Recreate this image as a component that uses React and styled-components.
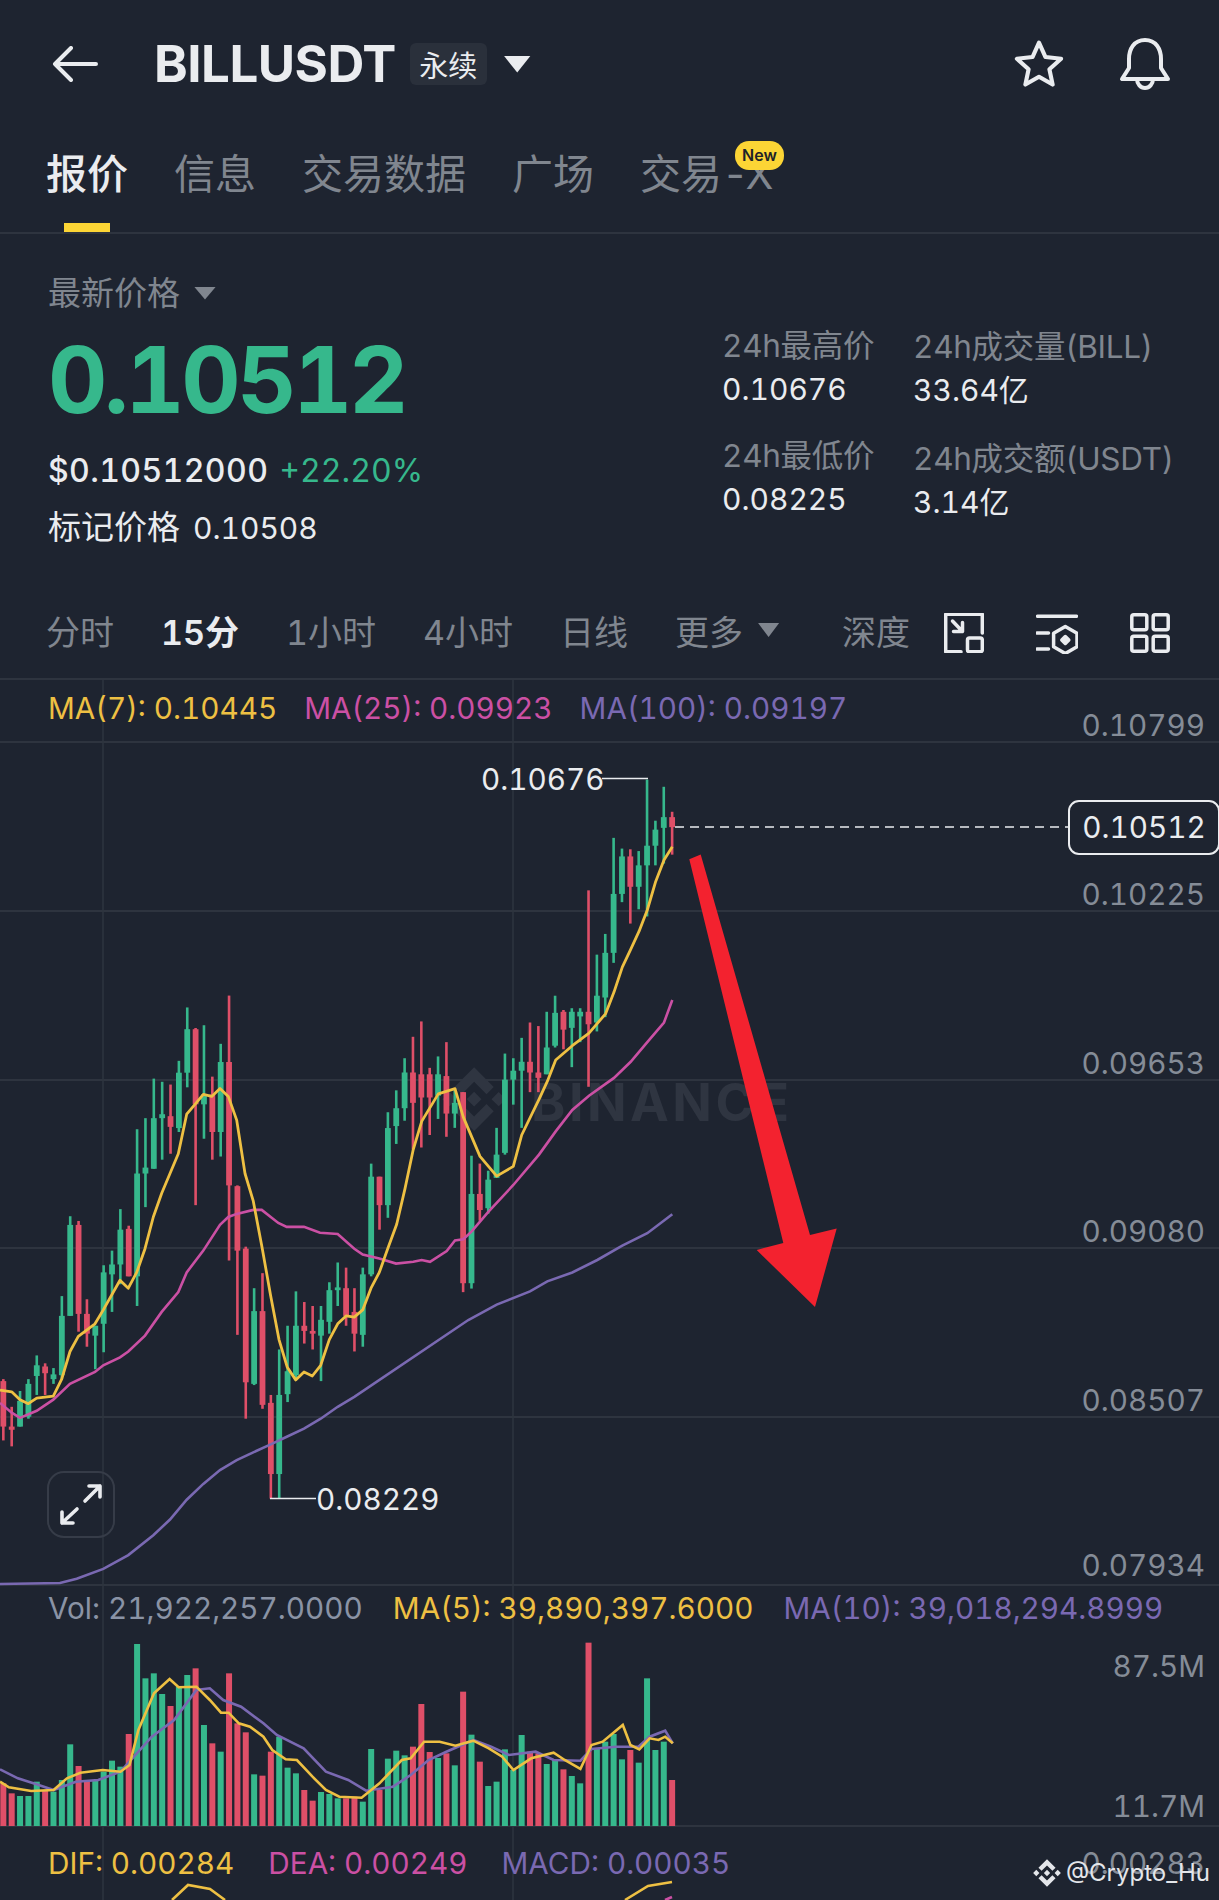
import React from 'react'
import styled, { createGlobalStyle } from 'styled-components'

const BG = '#1e2430'
const LINE = '#2e343f'
const TEXT = '#eaecef'
const MUTED = '#80868f'
const GREEN = '#36b88c'
const RED = '#df4f68'
const YELLOW = '#eec043'
const PINK = '#cb50a4'
const PURPLE = '#7a69b2'

const GlobalStyle = createGlobalStyle`
  html, body {
    margin: 0;
    padding: 0;
    background: ${BG};
  }
  * {
    box-sizing: border-box;
  }
`

const Page = styled.div`
  width: 1219px;
  height: 1900px;
  overflow: hidden;
  background: ${BG};
  color: ${TEXT};
  font-family: Inter, 'Noto Sans CJK SC', sans-serif;
  font-variant-numeric: tabular-nums;
`

const Header = styled.header`
  display: flex;
  align-items: center;
  height: 128px;
  padding: 0 48px 0 52px;
`

const Symbol = styled.h1`
  margin: 0 0 0 56px;
  font-size: 51px;
  line-height: 60px;
  font-weight: 700;
  letter-spacing: -0.5px;
`

const Tag = styled.span`
  margin-left: 14px;
  width: 77px;
  height: 42px;
  display: flex;
  align-items: center;
  justify-content: center;
  border-radius: 6px;
  background: #2a303b;
  font-size: 29px;
`

const Caret = styled.span`
  display: inline-block;
  flex: none;
  width: ${(p) => p.$w}px;
  height: ${(p) => p.$h}px;
  margin-left: ${(p) => p.$gap}px;
  background: ${(p) => p.$color};
  clip-path: polygon(0 0, 100% 0, 50% 100%);
`

const HeaderActions = styled.div`
  display: flex;
  align-items: center;
  gap: 54px;
  margin-left: auto;
`

const Tabs = styled.nav`
  display: flex;
  align-items: flex-start;
  gap: 46px;
  height: 106px;
  padding: 26px 0 0 46px;
  border-bottom: 2px solid ${LINE};
`

const Tab = styled.div`
  position: relative;
  display: flex;
  flex-direction: column;
  align-items: center;
  font-size: 41px;
  line-height: 40px;
  font-weight: ${(p) => (p.$active ? 500 : 400)};
  color: ${(p) => (p.$active ? TEXT : MUTED)};
`

const TabLabel = styled.span`
  white-space: nowrap;
`

const TabSuffix = styled.span`
  letter-spacing: -3px;
`

const TabBar = styled.span`
  width: 46px;
  height: 9px;
  margin-top: 29px;
  background: #fcd535;
`

const NewBadge = styled.span`
  position: absolute;
  left: 95px;
  top: -13px;
  width: 49px;
  height: 29px;
  border-radius: 14px;
  background: #fcd535;
  color: #1e2329;
  font-size: 16px;
  line-height: 29px;
  font-weight: 600;
  text-align: center;
`

const Overview = styled.section`
  display: flex;
  height: 356px;
  padding-left: 48px;
`

const PriceColumn = styled.div`
  width: 674px;
  padding-top: 39px;
`

const PriceLabel = styled.div`
  display: flex;
  align-items: center;
  font-size: 33px;
  line-height: 40px;
  color: ${MUTED};
`

const LastPrice = styled.div`
  margin-top: 17px;
  font-size: 92px;
  line-height: 100px;
  font-weight: 700;
  letter-spacing: -3.5px;
  color: ${GREEN};
`

const FiatRow = styled.div`
  display: flex;
  gap: 11px;
  margin-top: 21px;
  font-size: 32px;
  line-height: 40px;
  font-weight: 500;
  letter-spacing: 0.4px;
`

const Change = styled.span`
  color: ${GREEN};
  font-weight: 400;
  letter-spacing: 0;
`

const MarkRow = styled.div`
  display: flex;
  align-items: baseline;
  gap: 13px;
  margin-top: 16px;
  font-size: 33px;
  line-height: 40px;
`

const MarkValue = styled.span`
  font-size: 30px;
`

const StatColumn = styled.div`
  display: flex;
  flex-direction: column;
  width: ${(p) => p.$width}px;
  padding-top: ${(p) => p.$top}px;
  gap: ${(p) => p.$gap}px;
`

const Stat = styled.div`
  display: flex;
  flex-direction: column;
  gap: 7px;
  white-space: nowrap;
`

const StatLabel = styled.span`
  font-size: 31.5px;
  line-height: 36px;
  letter-spacing: -0.3px;
  color: ${MUTED};
`

const StatValue = styled.span`
  font-size: 30px;
  line-height: 36px;
`

const Toolbar = styled.div`
  display: flex;
  align-items: center;
  justify-content: space-between;
  height: 90px;
  padding: 0 49px 2px 46px;
  border-bottom: 2px solid ${LINE};
`

const IntervalRow = styled.div`
  display: flex;
  align-items: center;
  gap: 47px;
  padding-bottom: 6px;
`

const Interval = styled.span`
  display: flex;
  flex: none;
  align-items: center;
  white-space: nowrap;
  font-size: 34px;
  font-weight: ${(p) => (p.$active ? 600 : 400)};
  color: ${(p) => (p.$active ? TEXT : MUTED)};
`

const Depth = styled(Interval)`
  margin-left: 16px;
`

const ToolIcons = styled.div`
  display: flex;
  align-items: center;
  gap: 52px;
`

const Icon = styled.svg`
  display: block;
  flex: none;
  fill: none;
  stroke: ${TEXT};
  stroke-width: ${(p) => p.$stroke || 3.5};
  stroke-linecap: round;
  stroke-linejoin: round;
`

const Pane = styled.section`
  position: relative;
  height: ${(p) => p.$height}px;
`

const PaneSvg = styled.svg`
  display: block;
  width: 1219px;
  height: 100%;
`

const Legend = styled.div`
  position: absolute;
  left: 48px;
  top: ${(p) => p.$top}px;
  display: flex;
  gap: ${(p) => p.$gap}px;
  font-size: 29.7px;
  line-height: 36px;
  white-space: nowrap;
`

const LegendItem = styled.span`
  color: ${(p) => p.$color};
`

const AxisLabel = styled.text`
  font-family: Inter, sans-serif;
  font-size: 29.7px;
  font-variant-numeric: tabular-nums;
  fill: #858c97;
  text-anchor: end;
`

const ExtremeLabel = styled.text`
  font-family: Inter, sans-serif;
  font-size: 29.7px;
  font-variant-numeric: tabular-nums;
  fill: ${TEXT};
`

const ChartMark = styled.text`
  font-family: Inter, sans-serif;
  font-size: 52px;
  font-weight: 700;
  fill: #2f3541;
`

const PriceTag = styled.div`
  position: absolute;
  left: 1068px;
  top: 120px;
  width: 152px;
  height: 55px;
  border: 2px solid ${TEXT};
  border-radius: 11px;
  background: ${BG};
  font-size: 29.7px;
  line-height: 51px;
  text-align: center;
`

const ExpandButton = styled.button`
  position: absolute;
  left: 47px;
  top: 791px;
  width: 68px;
  height: 67px;
  padding: 0;
  border: 2px solid #363c48;
  border-radius: 17px;
  background: transparent;
`

const Credit = styled.div`
  position: absolute;
  right: 9px;
  bottom: 12px;
  display: flex;
  align-items: center;
  gap: 5px;
  font-size: 24px;
  line-height: 30px;
  color: #e4e6ea;
`

// the chart was read off enlarged crops, so each table keeps the crop's own units
const fromLeft = ([x, y]) => [x / 3, 960 + y / 2.529]
const fromRight = ([x, y]) => [340 + x / 3, 760 + y / 2.8]
const fromVol = ([x, y]) => [x / 2.24, 1580 + y / 3]
const toPoints = (list) => list.map((p) => `${p[0].toFixed(1)},${p[1].toFixed(1)}`).join(' ')

const leftCandles = [
  ['r', 1060, 1215, 1065, 1180], ['r', 1130, 1230, 1180, 1188], ['g', 1090, 1180, 1115, 1180],
  ['g', 1060, 1160, 1072, 1155], ['g', 1000, 1100, 1025, 1052], ['r', 1020, 1100, 1028, 1045],
  ['g', 1032, 1072, 1048, 1060], ['g', 850, 1060, 900, 1050], ['g', 648, 900, 670, 900],
  ['r', 660, 940, 670, 895], ['r', 858, 978, 895, 945], ['g', 925, 1035, 925, 950],
  ['g', 772, 992, 790, 920], ['g', 735, 890, 770, 795], ['g', 630, 820, 682, 770],
  ['r', 672, 800, 680, 800], ['g', 428, 875, 540, 800], ['g', 400, 625, 525, 540],
  ['g', 300, 528, 400, 528], ['g', 308, 505, 390, 400], ['r', 315, 490, 395, 422],
  ['g', 255, 435, 285, 425], ['g', 120, 322, 175, 285], ['r', 172, 620, 175, 365],
  ['g', 165, 452, 340, 365], ['r', 295, 505, 340, 435], ['g', 212, 497, 258, 435],
  ['r', 90, 760, 258, 570], ['r', 570, 948, 572, 735], ['r', 725, 1160, 730, 1068],
  ['g', 830, 1075, 888, 1072], ['r', 792, 1135, 888, 1125], ['r', 1100, 1362, 1120, 1300],
  ['g', 985, 1362, 1100, 1300], ['g', 925, 1118, 1040, 1098], ['g', 838, 1060, 925, 1050],
  ['r', 865, 970, 925, 938], ['r', 875, 985, 938, 945], ['g', 875, 1065, 910, 950],
  ['g', 815, 945, 835, 915], ['g', 765, 875, 828, 835], ['r', 778, 925, 830, 900],
  ['r', 830, 990, 890, 945], ['g', 778, 978, 795, 948], ['g', 515, 800, 548, 795],
  ['r', 548, 682, 548, 620], ['g', 385, 652, 425, 620],
]

const rightCandles = [
  ['g', 925, 1075, 975, 1025], ['g', 835, 1010, 875, 975], ['r', 775, 1090, 875, 960],
  ['r', 732, 1085, 880, 945], ['r', 862, 1050, 880, 945], ['g', 830, 1005, 880, 940],
  ['r', 790, 1055, 885, 990], ['g', 920, 1030, 960, 990], ['r', 930, 1490, 930, 1465],
  ['g', 1108, 1480, 1215, 1465], ['r', 1130, 1290, 1215, 1260], ['g', 1150, 1270, 1175, 1255],
  ['g', 1030, 1170, 1105, 1170], ['g', 822, 1105, 895, 1100], ['g', 835, 965, 870, 895],
  ['g', 778, 1030, 845, 870], ['r', 735, 930, 845, 875], ['r', 745, 930, 875, 890],
  ['g', 705, 880, 805, 880], ['g', 660, 805, 708, 800], ['r', 700, 810, 705, 755],
  ['g', 695, 860, 705, 750], ['g', 695, 790, 705, 718], ['r', 365, 915, 705, 740],
  ['g', 545, 760, 660, 735], ['g', 487, 720, 540, 665], ['g', 218, 568, 375, 540],
  ['g', 248, 398, 270, 375], ['r', 250, 458, 270, 355], ['g', 255, 418, 295, 355],
  ['g', 55, 438, 240, 295], ['g', 170, 295, 195, 240], ['g', 75, 290, 160, 190],
  ['r', 145, 265, 160, 188],
]

const candleX = (i) => 3.33 + i * 8.36

const candles = [
  ...leftCandles.map(([c, wt, wb, bt, bb], i) => ({
    c, x: candleX(i),
    wt: 960 + wt / 2.529, wb: 960 + wb / 2.529, bt: 960 + bt / 2.529, bb: 960 + bb / 2.529,
  })),
  ...rightCandles.map(([c, wt, wb, bt, bb], i) => ({
    c, x: candleX(i + leftCandles.length),
    wt: 760 + wt / 2.8, wb: 760 + wb / 2.8, bt: 760 + bt / 2.8, bb: 760 + bb / 2.8,
  })),
]

const ma7 = [
  ...[[0, 1088], [35, 1092], [60, 1112], [85, 1122], [110, 1108], [160, 1103], [185, 1060], [210, 990], [235, 952], [285, 920], [310, 885], [360, 810], [385, 830], [410, 790], [435, 730], [460, 650], [485, 590], [510, 540], [535, 490], [560, 390], [585, 365], [610, 340], [635, 345], [660, 325], [685, 345], [710, 405], [735, 540], [760, 610], [787, 730], [812, 850], [837, 960], [862, 1030], [887, 1062], [912, 1042], [937, 1052], [962, 1025], [988, 960], [1013, 920], [1038, 900], [1063, 903], [1088, 885], [1113, 830], [1138, 790], [1163, 730]].map(fromLeft),
  ...[[170, 1300], [195, 1200], [220, 1090], [245, 1012], [295, 935], [345, 920], [370, 1000], [420, 1110], [470, 1165], [520, 1138], [545, 1050], [597, 950], [622, 900], [647, 840], [697, 800], [747, 765], [797, 710], [822, 650], [847, 580], [872, 530], [897, 480], [922, 420], [947, 340], [972, 280], [997, 243]].map(fromRight),
]

const ma25 = [
  ...[[0, 1120], [35, 1145], [60, 1158], [110, 1140], [160, 1112], [210, 1072], [285, 1042], [310, 1025], [360, 1005], [385, 990], [435, 950], [485, 890], [535, 840], [560, 790], [610, 735], [660, 670], [685, 650], [710, 642], [760, 632], [785, 632], [835, 665], [860, 675], [912, 675], [960, 690], [1013, 693], [1063, 730], [1088, 745], [1138, 755]].map(fromLeft),
  ...[[168, 1410], [220, 1405], [245, 1400], [270, 1405], [320, 1375], [345, 1345], [370, 1342], [395, 1320], [445, 1265], [520, 1190], [597, 1105], [647, 1040], [697, 980], [747, 940], [822, 890], [872, 845], [922, 790], [972, 735], [997, 672]].map(fromRight),
]

const ma100 = [
  [0, 1584], [60, 1583],
  ...[[230, 1565], [310, 1540], [385, 1505], [460, 1455], [510, 1415], [560, 1365], [610, 1325], [660, 1290], [710, 1265], [760, 1245], [812, 1225], [862, 1205], [912, 1185], [962, 1160], [1013, 1130], [1063, 1105]].map(fromLeft),
  ...[[385, 1568], [470, 1525], [570, 1488], [622, 1460], [697, 1435], [772, 1400], [847, 1360], [922, 1325], [997, 1272]].map(fromRight),
]

const volumes = [
  ['r', 610], ['r', 640], ['g', 648], ['g', 648], ['g', 605], ['r', 630], ['g', 635], ['g', 600], ['g', 493],
  ['r', 558], ['r', 600], ['g', 600], ['g', 575], ['g', 542], ['g', 560], ['r', 462], ['g', 192], ['g', 295],
  ['g', 280], ['g', 342], ['r', 378], ['g', 320], ['g', 285], ['r', 265], ['g', 435], ['r', 490], ['g', 515],
  ['r', 280], ['r', 430], ['r', 457], ['g', 583], ['r', 587], ['r', 515], ['g', 470], ['g', 563], ['g', 580],
  ['r', 630], ['r', 662], ['g', 636], ['g', 642], ['g', 655], ['r', 655], ['r', 650], ['g', 665], ['g', 507],
  ['r', 630], ['g', 536], ['g', 512], ['g', 526], ['r', 500], ['r', 372], ['r', 516], ['g', 534], ['r', 520],
  ['g', 556], ['r', 335], ['g', 464], ['r', 545], ['g', 618], ['g', 605], ['g', 508], ['g', 570], ['g', 465],
  ['r', 515], ['r', 520], ['g', 552], ['g', 540], ['r', 568], ['g', 588], ['g', 610], ['r', 188], ['g', 505],
  ['g', 485], ['g', 462], ['g', 538], ['r', 510], ['g', 548], ['g', 295], ['g', 510], ['g', 485], ['r', 600],
]

const volMa5 = [[0, 605], [20, 622], [70, 633], [120, 630], [150, 595], [180, 578], [230, 570], [270, 575], [290, 555], [310, 450], [345, 340], [380, 297], [400, 322], [440, 320], [470, 360], [495, 398], [512, 398], [535, 430], [560, 440], [590, 470], [610, 510], [640, 538], [665, 540], [700, 590], [730, 630], [760, 650], [810, 653], [850, 610], [900, 540], [920, 535], [950, 485], [985, 485], [1020, 497], [1060, 482], [1095, 505], [1125, 530], [1150, 570], [1190, 535], [1240, 518], [1265, 540], [1300, 567], [1325, 495], [1350, 485], [1395, 435], [1412, 495], [1432, 508], [1455, 475], [1475, 480], [1490, 470], [1507, 490]].map(fromVol)

const volMa10 = [[0, 568], [40, 595], [80, 612], [120, 630], [170, 605], [220, 600], [270, 575], [300, 530], [340, 470], [390, 420], [440, 330], [470, 325], [500, 360], [540, 380], [590, 430], [620, 465], [680, 505], [730, 575], [780, 600], [820, 632], [880, 620], [920, 585], [960, 540], [1000, 515], [1060, 480], [1100, 500], [1140, 525], [1200, 515], [1240, 540], [1300, 542], [1325, 507], [1380, 500], [1430, 500], [1455, 470], [1490, 452], [1507, 490]].map(fromVol)

const arrow = [[1048, 278], [1082, 265], [1410, 1330], [1490, 1312], [1425, 1532], [1250, 1372], [1330, 1352]].map(fromRight)

const gridRows = [742, 911, 1080, 1248, 1417, 1585]
const axisLabels = [
  ['0.10799', 736], ['0.10225', 905], ['0.09653', 1074], ['0.09080', 1242], ['0.08507', 1411], ['0.07934', 1576],
]

const binancePath =
  'M38.73 53.2 63 28.94 87.28 53.22l14.12-14.12L63 .7 24.6 39.1zM.7 63l14.12-14.12L28.94 63 14.82 77.12zM38.73 72.8 63 97.06l24.28-24.28 14.13 14.11-.01.01L63 125.3 24.6 86.9l-.02-.02zM97.06 63l14.12-14.12L125.3 63l-14.12 14.12zM77.32 63h.01L63 48.67 52.41 59.26l-1.22 1.22-2.51 2.51-.02.02.02.02L63 77.33 77.33 63.01z'

function VerticalGrid({ top, bottom }) {
  return [103, 513].map((x) => (
    <line key={x} x1={x} x2={x} y1={top} y2={bottom} stroke={LINE} strokeWidth="1.5" />
  ))
}

function Candles() {
  return candles.map((k, i) => {
    const color = k.c === 'g' ? GREEN : RED
    return (
      <g key={i} fill={color}>
        <rect x={k.x - 1.3} y={k.wt} width="2.6" height={k.wb - k.wt} />
        <rect x={k.x - 2.9} y={k.bt} width="5.8" height={Math.max(k.bb - k.bt, 2.5)} />
      </g>
    )
  })
}

function MainChart() {
  return (
    <Pane $height={906}>
      <PaneSvg viewBox="0 680 1219 906">
        {gridRows.map((y) => (
          <line key={y} x1="0" x2="1219" y1={y} y2={y} stroke={LINE} strokeWidth="2" />
        ))}
        <VerticalGrid top={680} bottom={1586} />
        <g transform="translate(442 1067) scale(0.51)" fill="#2f3541">
          <path d={binancePath} />
        </g>
        <ChartMark x="531" y="1121" textLength="258">BINANCE</ChartMark>
        <Candles />
        <polyline points={toPoints(ma100)} fill="none" stroke={PURPLE} strokeWidth="2.6" />
        <polyline points={toPoints(ma25)} fill="none" stroke={PINK} strokeWidth="2.6" />
        <polyline points={toPoints(ma7)} fill="none" stroke={YELLOW} strokeWidth="2.8" strokeLinejoin="round" />
        <polyline points="602,778.5 648,778.5" fill="none" stroke={TEXT} strokeWidth="1.5" />
        <polyline points="270,1498.5 316,1498.5" fill="none" stroke={TEXT} strokeWidth="1.5" />
        <ExtremeLabel x="481" y="790">0.10676</ExtremeLabel>
        <ExtremeLabel x="316" y="1510">0.08229</ExtremeLabel>
        <line x1="675" x2="1068" y1="827" y2="827" stroke={TEXT} strokeWidth="1.5" strokeDasharray="9 6" />
        <polygon points={toPoints(arrow)} fill="#f3222f" />
        {axisLabels.map(([label, y]) => (
          <AxisLabel key={label} x="1205" y={y}>{label}</AxisLabel>
        ))}
      </PaneSvg>
      <Legend $top={10} $gap={27}>
        <LegendItem $color={YELLOW}>MA(7): 0.10445</LegendItem>
        <LegendItem $color={PINK}>MA(25): 0.09923</LegendItem>
        <LegendItem $color={PURPLE}>MA(100): 0.09197</LegendItem>
      </Legend>
      <PriceTag>0.10512</PriceTag>
      <ExpandButton aria-label="expand">
        <Icon width="64" height="63" viewBox="2 2 64 63" $stroke={3.6}>
          <path d="M38 30 53 15M42 15h11v11M30 38 15 52M15 41v11h11" />
        </Icon>
      </ExpandButton>
    </Pane>
  )
}

function VolumeChart() {
  return (
    <Pane $height={241}>
      <PaneSvg viewBox="0 1586 1219 241">
        <line x1="0" x2="1219" y1="1826" y2="1826" stroke={LINE} strokeWidth="2" />
        <VerticalGrid top={1586} bottom={1827} />
        {volumes.map(([c, top], i) => {
          const y = 1580 + top / 3
          return (
            <rect key={i} x={candleX(i) - 3} y={y} width="6" height={1826 - y} fill={c === 'g' ? GREEN : RED} />
          )
        })}
        <polyline points={toPoints(volMa10)} fill="none" stroke={PURPLE} strokeWidth="2.6" />
        <polyline points={toPoints(volMa5)} fill="none" stroke={YELLOW} strokeWidth="2.6" />
        <AxisLabel x="1205" y="1677">87.5M</AxisLabel>
        <AxisLabel x="1205" y="1817">11.7M</AxisLabel>
      </PaneSvg>
      <Legend $top={4} $gap={30}>
        <LegendItem $color="#8a93a5">Vol: 21,922,257.0000</LegendItem>
        <LegendItem $color={YELLOW}>MA(5): 39,890,397.6000</LegendItem>
        <LegendItem $color={PURPLE}>MA(10): 39,018,294.8999</LegendItem>
      </Legend>
    </Pane>
  )
}

function MacdChart() {
  return (
    <Pane $height={73}>
      <PaneSvg viewBox="0 1827 1219 73">
        <VerticalGrid top={1827} bottom={1900} />
        <polyline points="172,1900 188,1885 210,1889 225,1900" fill="none" stroke={YELLOW} strokeWidth="2.6" />
        <polyline points="625,1900 648,1886 672,1882" fill="none" stroke={YELLOW} strokeWidth="2.6" />
        <polyline points="665,1900 672,1897" fill="none" stroke={PINK} strokeWidth="2.6" />
        <AxisLabel x="1205" y="1874">0.00283</AxisLabel>
      </PaneSvg>
      <Legend $top={18} $gap={34}>
        <LegendItem $color={YELLOW}>DIF: 0.00284</LegendItem>
        <LegendItem $color={PINK}>DEA: 0.00249</LegendItem>
        <LegendItem $color={PURPLE}>MACD: 0.00035</LegendItem>
      </Legend>
      <Credit>
        <svg width="28" height="28" viewBox="0 0 126 126" fill="#e4e6ea">
          <path d={binancePath} />
        </svg>
        @Crypto_Hu
      </Credit>
    </Pane>
  )
}

export default function App() {
  return (
    <Page>
      <GlobalStyle />
      <Header>
        <Icon width="46" height="36" viewBox="0 0 46 36" $stroke={4}>
          <path d="M44 18H3M19 2 3 18l16 16" />
        </Icon>
        <Symbol>BILLUSDT</Symbol>
        <Tag>永续</Tag>
        <Caret $w={27} $h={17} $gap={17} $color={TEXT} />
        <HeaderActions>
          <Icon width="52" height="50" viewBox="0 0 24 23" $stroke={1.9}>
            <path d="M12 1.6l3 6.7 7.2.8-5.4 4.8 1.5 7.1-6.3-3.6-6.3 3.6 1.5-7.1L1.8 9.1 9 8.3z" />
          </Icon>
          <Icon width="52" height="54" viewBox="0 0 52 54" $stroke={4}>
            <path d="M26 3C15 3 10 12 10 22v9L3 42h46l-7-11v-9C42 12 37 3 26 3Z" />
            <path d="M18 42a8 9 0 0 0 16 0" />
          </Icon>
        </HeaderActions>
      </Header>

      <Tabs>
        <Tab $active>
          报价
          <TabBar />
        </Tab>
        <Tab>信息</Tab>
        <Tab>交易数据</Tab>
        <Tab>广场</Tab>
        <Tab>
          <TabLabel>
            交易<TabSuffix>-X</TabSuffix>
          </TabLabel>
          <NewBadge>New</NewBadge>
        </Tab>
      </Tabs>

      <Overview>
        <PriceColumn>
          <PriceLabel>
            最新价格
            <Caret $w={22} $h={13} $gap={14} $color={MUTED} />
          </PriceLabel>
          <LastPrice>0.10512</LastPrice>
          <FiatRow>
            <span>$0.10512000</span>
            <Change>+22.20%</Change>
          </FiatRow>
          <MarkRow>
            <span>标记价格</span>
            <MarkValue>0.10508</MarkValue>
          </MarkRow>
        </PriceColumn>
        <StatColumn $width={191} $top={94} $gap={31}>
          <Stat>
            <StatLabel>24h最高价</StatLabel>
            <StatValue>0.10676</StatValue>
          </Stat>
          <Stat>
            <StatLabel>24h最低价</StatLabel>
            <StatValue>0.08225</StatValue>
          </Stat>
        </StatColumn>
        <StatColumn $width={300} $top={95} $gap={33}>
          <Stat>
            <StatLabel>24h成交量(BILL)</StatLabel>
            <StatValue>33.64亿</StatValue>
          </Stat>
          <Stat>
            <StatLabel>24h成交额(USDT)</StatLabel>
            <StatValue>3.14亿</StatValue>
          </Stat>
        </StatColumn>
      </Overview>

      <Toolbar>
        <IntervalRow>
          <Interval>分时</Interval>
          <Interval $active>15分</Interval>
          <Interval>1小时</Interval>
          <Interval>4小时</Interval>
          <Interval>日线</Interval>
          <Interval>
            更多
            <Caret $w={21} $h={14} $gap={15} $color={MUTED} />
          </Interval>
          <Depth>深度</Depth>
        </IntervalRow>
        <ToolIcons>
          <Icon width="40" height="40" viewBox="0 0 40 40">
            <path d="M17 38.7H1.7V1.3h36.6V20" />
            <rect x="23.5" y="25" width="14.8" height="13.7" rx="2" />
            <path d="M8.5 8l10 10.5M18.5 9.5v9h-9" />
          </Icon>
          <Icon width="42" height="41" viewBox="0 0 42 41">
            <path d="M1.5 3.3h39M1 20h11.5M1 36h11.5" />
            <path d="M29.3 13.5 41 20.2v13.6l-11.7 6.7-11.7-6.7V20.2z" />
            <path d="M29.3 23.5l3.5 3.5-3.5 3.5-3.5-3.5z" fill={TEXT} />
          </Icon>
          <Icon width="40" height="40" viewBox="0 0 40 40">
            <rect x="1.8" y="1.8" width="15" height="15" rx="2" />
            <rect x="23.2" y="1.8" width="15" height="15" rx="2" />
            <rect x="1.8" y="23.2" width="15" height="15" rx="2" />
            <rect x="23.2" y="23.2" width="15" height="15" rx="2" />
          </Icon>
        </ToolIcons>
      </Toolbar>

      <MainChart />
      <VolumeChart />
      <MacdChart />
    </Page>
  )
}
